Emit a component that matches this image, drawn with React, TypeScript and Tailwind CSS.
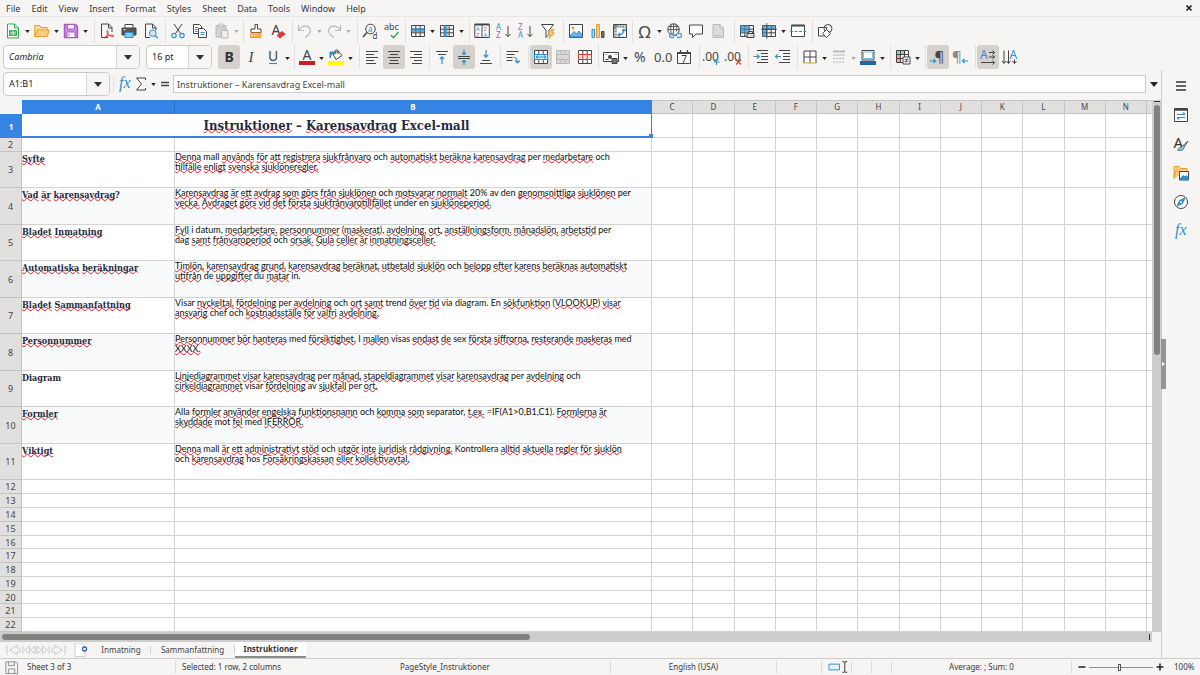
import React from 'react';

const INK = '#454545';
const BLUE = '#2f8fd0';
const GREEN = '#35a853';
const ORANGE = '#ef9a2c';
const RED = '#dc3a3a';
const PURPLE = '#a95cc0';
const GREY = '#b8b8b8';

const gridLines = (color: string) => <path d="M1.5 2.5h13v11h-13zM1.5 6.2h13M1.5 9.8h13M5.8 2.5v11M10.2 2.5v11" stroke={color} />;
const glyph = (x: number, y: number, size: number, color: string, text: string) => (
  <text x={x} y={y} fontSize={size} fill={color} stroke="none" fontFamily="Noto Sans, sans-serif">{text}</text>
);
const glyphPair = (x: number, size: number, top: number, bottom: number, first: string, second: string) => (
  <text fontSize={size} stroke="none" fontFamily="Noto Sans, sans-serif">
    <tspan x={x} y={top} fill={first === 'A' ? BLUE : PURPLE}>{first}</tspan>
    <tspan x={x} y={bottom} fill={second === 'A' ? BLUE : PURPLE}>{second}</tspan>
  </text>
);

const icons: Record<string, React.ReactNode> = {
  new: <><path d="M2.5 1h7l4 4v10h-11z" fill="#fff" stroke={GREEN} /><path d="M9.5 1v4h4" stroke={GREEN} /><path d="M4.5 7.5h7v5h-7z" fill={GREEN} stroke={GREEN} /><path d="M5 9.2h6M5 11h6M8 7.5v5" stroke="#fff" strokeWidth=".7" /></>,
  open: <><path d="M.7 13.5V2.5h5l1.5 2h6v3" fill="#fbd9a0" stroke={ORANGE} /><path d="M.7 13.5 3.4 7h12l-2.2 6.5z" fill="#fbcb80" stroke={ORANGE} /></>,
  save: <><path d="M1.5 1.5h11l2 2v11h-13z" fill="#c98be0" stroke={PURPLE} strokeWidth="1.4" /><path d="M4.5 1.5h7v4.5h-7z" fill="#fff" stroke={PURPLE} /><path d="M4 9h8v5.500H4z" fill="#fff" stroke={PURPLE} /><path d="M6 11v2" stroke={PURPLE} /></>,
  pdf: <><path d="M2.500 1h7l3.500 3.500V9M9 14.500H2.500V1M9.500 1v4h3.500" fill="none" stroke={INK} /><path d="M5.500 15c2.500-2 4-5 3.500-7-.5-1-1.500 0-1 1.200 1 2.600 4 5 6.500 4.300 1-.5-.5-1.500-2.500-1.300-2.500.2-5 1.300-6.500 2.800z" stroke={RED} /></>,
  print: <><path d="M4 5V1.500h8V5" fill="#fff" stroke={INK} /><path d="M1 5h14v7H1z" fill="#565656" stroke={INK} /><path d="M4 9.500h8v5H4z" fill="#8ccaf0" stroke={BLUE} /><path d="M2.500 6.700h2" stroke="#fff" /></>,
  preview: <><path d="M2.500 14.500V1h7l3.500 3.500V7M2.500 14.500H7M9.500 1v4h3.500" stroke={INK} /><circle cx="9.800" cy="10.200" r="3.300" fill="#cfe8f8" stroke={BLUE} /><path d="m12.300 12.800 2.400 2.400" stroke={BLUE} strokeWidth="1.300" /></>,
  cut: <><path d="m4 1 6.500 9.500M12 1 5.500 10.500" stroke={INK} /><circle cx="4" cy="12.500" r="2.200" stroke={BLUE} strokeWidth="1.200" /><circle cx="12" cy="12.500" r="2.200" stroke={BLUE} strokeWidth="1.200" /></>,
  copy: <><path d="M1.500 1.500h6l2 2v7h-8z" fill="#fff" stroke={INK} /><path d="M6.500 5.500h5l3 3v6h-8z" fill="#fff" stroke={INK} /><path d="M3 4.500h3M3 6.500h2.500M3 8.500h2.500M8.500 9.500h4M8.500 11.500h4" stroke={BLUE} /></>,
  paste: <><path d="M2 2.500h10v11.500H2z" fill="#d2d2d0" stroke={GREY} /><path d="M5 1h4v3H5z" fill="#eee" stroke={GREY} /><path d="M7.500 7.500h6.500v7.500H7.500z" fill="#eee" stroke={GREY} /></>,
  brush: <><path d="M7 1.500h2.500V6h3.500v3.500H3V6h4z" fill="#fff" stroke={INK} /><path d="M3 10h10v4.500H2.500z" fill="#fbcb80" stroke={ORANGE} /><path d="M5.500 11v3M8 11v3M10.500 11v3" stroke={ORANGE} /></>,
  clear: <>{glyph(1.500, 12, 14, INK, 'A')}<path d="m7 12.500 5-4 3 2.500-5 4z" fill={RED} stroke={RED} /></>,
  undo: <path d="M1.500 2v5.500H7M2 7c3-5 9-5 11-1 1.500 3-1 6-5 8.500" stroke={GREY} strokeWidth="1.200" />,
  redo: <path d="M14.500 2v5.500H9M14 7C11 2 5 2 3 6c-1.500 3 1 6 5 8.500" stroke={GREY} strokeWidth="1.200" />,
  find: <><circle cx="8.500" cy="6" r="4.800" stroke={INK} /><path d="m5 9.500-4 4.500" stroke={INK} strokeWidth="1.500" /><text fontSize="8" stroke="none" fontFamily="Noto Sans, sans-serif"><tspan x="6" y="8.500" fill={BLUE}>a</tspan><tspan x="10.500" y="15.500" fill={INK}>d</tspan></text></>,
  spell: <>{glyph(0, 7, 9, INK, 'abc')}<path d="m7 12 2.500 2.700L14.500 9" stroke={GREEN} strokeWidth="1.500" /></>,
  rows: <>{gridLines(INK)}<path d="M1.500 5h13v4h-13z" fill={BLUE} fillOpacity=".75" stroke="none" /></>,
  cols: <>{gridLines(INK)}<path d="M4.500 2h4v12h-4z" fill={BLUE} fillOpacity=".75" stroke="none" /></>,
  sort: <><path d="M.8 1.500h14.500v13H.8zM8 1.500v13" fill="#fff" stroke={INK} /><path d="M.8 1.500h14.500" stroke={INK} strokeWidth="2" />{glyphPair(2, 6, 8, 13.500, 'A', 'Z')}{glyphPair(9.500, 6, 8, 13.500, 'Z', 'A')}</>,
  asc: <>{glyphPair(0, 8, 7, 15, 'A', 'Z')}<path d="M12 3v10.500M9.500 11l2.500 2.700 2.500-2.700" stroke={INK} /></>,
  desc: <>{glyphPair(0, 8, 7, 15, 'Z', 'A')}<path d="M12 3v10.500M9.500 11l2.500 2.700 2.500-2.700" stroke={INK} /></>,
  filter: <><path d="M1.500 1.500h12L9 7.500v4l-3 3v-7z" fill="#fff" stroke={INK} /><path d="M11.500 6.500 8 11.500h2.500L9 15.500l5.500-5.500h-2.500l2-3.500z" fill="#fbcb80" stroke={ORANGE} /></>,
  image: <><path d="M1.500 1.500h13v13h-13z" fill="#fff" stroke={INK} /><path d="m2 13 4-4.500 2.500 2.500L11 8l3 4v2H2z" fill="#6db5e6" stroke={BLUE} /><circle cx="5" cy="5" r="1.500" fill={ORANGE} stroke="none" /></>,
  chart: <><path d="M2 6.500h2.500v8H2z" fill="#a9d8f5" stroke={BLUE} /><path d="M6.500 1.500h3v13h-3z" fill="#fbcb80" stroke={ORANGE} /><path d="M11.500 8.500H14v6h-2.500z" fill="#777" stroke={INK} /></>,
  pivot: <><path d="M1.500 1.500h13v13h-13z" fill="#fff" stroke={INK} /><path d="M2 3.500h12.500M3.500 2v12.500" stroke="#8a8a8a" strokeWidth="2.500" strokeDasharray="2 .8" /><path d="M6 12c4 0 6-2 6-6M8 10l-2 2 2 2M10 8l2-2 2 2" stroke={BLUE} strokeWidth="1.200" /></>,
  omega: glyph(1.500, 14.500, 17, INK, 'Ω'),
  link: <><circle cx="7.500" cy="6.500" r="5.700" stroke={INK} /><path d="M2 6.500h11.500M3 3.500h9M7.500 1v9M5.500 1.500Q3.500 6 5.500 11M9.500 1.500q2 3 1 7" stroke={INK} strokeWidth=".8" /><path d="M8 10.500H5.500a2 2 0 0 0 0 4H8M11 10.500h2.500a2 2 0 0 1 0 4H11M7.500 12.500h4" fill="none" stroke="#4b9fea" strokeWidth="1.300" /></>,
  comment: <path d="M1.500 2h13v9H8l-3.500 3.500V11h-3z" fill="#fff" stroke={INK} />,
  header: <path d="M3 1.500h7l3.500 3.500v9.500H3zM10 1.500V5h3.500M5 12.500h6" fill="#dcdcda" stroke={GREY} />,
  printArea: <>{gridLines(INK)}<path d="M1.500 2.500h8.700v7.300H1.500z" fill={BLUE} fillOpacity=".7" stroke="none" /><path d="M8 10.500h7v4H8zM9.500 8.500h4v2h-4z" fill="#ddd" stroke={INK} /></>,
  freeze: <>{gridLines(INK)}<path d="M1.500 2.500h13v3.500H6v8H1.500z" fill={BLUE} fillOpacity=".7" stroke="none" /><path d="M5.800 0v16M0 6.200h16" stroke={INK} strokeWidth=".8" /></>,
  split: <><path d="M1.500 2.500h13v11h-13z" fill="#fff" stroke={INK} /><path d="M1.500 2.500h13" stroke={INK} strokeWidth="2" /><path d="M0 8.500h16" stroke={BLUE} strokeDasharray="3 1.500" /></>,
  shapes: <><path d="M1.500 4.500h8v8.500h-8z" fill="#fff" stroke={INK} /><circle cx="11" cy="5.500" r="4" stroke={INK} /><path d="m9.500 6.500 4 4-4 4-4-4z" fill="#fff" stroke={INK} /></>,
  left: <path d="M2 2.500h12M2 5.500h8M2 8.500h12M2 11.500h8M2 14.500h10" stroke={INK} />,
  center: <path d="M2 2.500h12M4 5.500h8M2 8.500h12M4 11.500h8M3 14.500h10" stroke={INK} />,
  right: <path d="M2 2.500h12M6 5.500h8M2 8.500h12M6 11.500h8M4 14.500h10" stroke={INK} />,
  bold: <text x="3.500" y="13" fontSize="14" fontWeight="700" fill="#333" stroke="none" fontFamily="Noto Sans, sans-serif">B</text>,
  italic: <text x="5.500" y="13" fontSize="15" fontStyle="italic" fill="#444" stroke="none" fontFamily="Liberation Serif, serif">I</text>,
  underline: <>{glyph(3, 12, 14, '#444', 'U')}<path d="M4 14.500h8" stroke={BLUE} strokeWidth="1.200" /></>,
  fontColor: <>{glyph(3.500, 10.500, 14, INK, 'A')}<path d="M0 12h16v4H0z" fill="#c9211e" stroke="none" /></>,
  highlight: <><path d="m5 5 5-3 4 4.500-6 4z" fill="#fff" stroke={INK} /><path d="M7 5.500V2c0-1.500 3-1.500 3 0v3" stroke={INK} /><path d="M2 9V3h5L3.500 5z" fill={BLUE} stroke={BLUE} /><path d="M0 12h16v4H0z" fill="#ffff00" stroke="none" /></>,
  top: <><path d="M2 2.500h12M4 5.500h8" stroke={INK} /><path d="M8 8v7M5.800 10 8 7.800l2.200 2.200" stroke={BLUE} strokeWidth="1.200" /></>,
  middle: <><path d="M2 7.500h12M2 9.500h12" stroke={INK} /><path d="M8 .5v5M6 3.700l2 2 2-2M8 16v-4.500M6 13.300l2-2 2 2" stroke={BLUE} strokeWidth="1.200" /></>,
  bottom: <><path d="M4 11.500h8M2 14.500h12" stroke={INK} /><path d="M8 1v7M5.800 6 8 8.200 10.200 6" stroke={BLUE} strokeWidth="1.200" /></>,
  wrap: <><path d="M1.500 2.500h12M1.500 5.500h8M1.500 8.500h6M1.500 11.500h6" stroke={INK} /><path d="M8.500 8.500c3 0 4 1.500 4 5M10.300 11.500l2.200 2.500 2.500-2.200" stroke={BLUE} strokeWidth="1.200" /></>,
  merge: <><path d="M1.500 1.500h13v13h-13zM5.800 1.500v4M10.200 1.500v4M5.800 11v3.500M10.200 11v3.500" fill="#fff" stroke={INK} /><path d="M1.500 5.500h13v5h-13z" fill="#cfe8f8" stroke={BLUE} /><path d="M3 8h10M5 6.500 3 8l2 1.500M11 6.500 13 8l-2 1.500" stroke={BLUE} /></>,
  mergeOff: <><path d="M1.500 1.500h13v13h-13z" fill="#d8d8d6" stroke={GREY} /><path d="M1.500 5.500h13M1.500 10.500h13M5.800 1.500v4M10.200 1.500v4M5.800 10.500v4M10.200 10.500v4" stroke={GREY} /></>,
  splitCells: <><path d="M1.500 1.500h13v13h-13zM5.800 1.500v4M10.200 1.500v4M5.800 11v3.500M10.200 11v3.500" fill="#fff" stroke={INK} /><path d="M1.500 5.500h13v5h-13zM5.800 5.500v5M10.200 5.500v5" fill="#fde3e3" stroke={RED} /></>,
  currency: <><path d="M.5 3.500h15v9H.5z" fill="#fff" stroke={INK} /><circle cx="7" cy="8" r="2" fill={INK} stroke="none" /><path d="M9 9.500h5v5H9z" fill="#777" stroke={INK} /><path d="M2.500 5.500h1M12.500 5.500h1M2.500 10.500h3" stroke={INK} /></>,
  percent: glyph(2, 13, 14, INK, '%'),
  number: glyph(0, 13, 13, INK, '0.0'),
  date: <><path d="M1.500 3.500h13v11h-13z" fill="#fff" stroke={INK} /><path d="M1.500 4h13" stroke={INK} strokeWidth="2" /><path d="M4.500 1v3M11.500 1v3" stroke={INK} strokeWidth="1.200" />{glyph(5.200, 13.500, 10, '#333', '7')}</>,
  addDec: <>{glyph(-2, 12, 12, INK, '.00')}<path d="M9.500 13h6M12.500 10v6" stroke={BLUE} strokeWidth="1.200" /></>,
  delDec: <>{glyph(-2, 12, 12, INK, '.00')}<path d="m10 10.500 5 5M15 10.500l-5 5" stroke={RED} strokeWidth="1.200" /></>,
  indent: <><path d="M4 1.500h11M8 4.500h7M8 7.500h7M8 10.500h7M4 13.500h11" stroke={INK} /><path d="M.5 7.500h5.500M4 5.300l2.200 2.200L4 9.700" stroke={BLUE} strokeWidth="1.200" /></>,
  outdent: <><path d="M4 1.500h11M8 4.500h7M8 7.500h7M8 10.500h7M4 13.500h11" stroke={INK} /><path d="M6 7.500H.7M2.700 5.300.5 7.500l2.200 2.200" stroke={BLUE} strokeWidth="1.200" /></>,
  borders: <><path d="M2 14V2h12v12M8 2v12M2 8h12" fill="#fff" stroke={INK} /><path d="M1.500 14h13" stroke={ORANGE} /></>,
  lineStyle: <><path d="M2 2.500h12" stroke={GREY} strokeWidth="2" /><path d="M2 6h12" stroke={GREY} /><path d="M2 9.500h12M2 13h12" stroke={GREY} strokeDasharray="2 1" /></>,
  borderColor: <><path d="M2 1.500h12v9.500H2z" fill="#fff" stroke={INK} /><path d="M3.500 3h9v6.500h-9z" stroke="#7ab8e4" /><path d="M0 12h16v4H0z" fill="#1f66a8" stroke="none" /></>,
  conditional: <><path d="M1.500 1.500h9v4h-9z" fill="#8fd6a4" stroke="none" /><path d="M1.500 5.500h4v8h-4z" fill="#f3a0a0" stroke="none" /><path d="M1.500 1.500h12v12h-12zM5.500 1.500v12M9.500 1.500v12M1.500 5.500h12M1.500 9.500h12" stroke={INK} /><path d="M8 8h7v7H8z" fill="#fff" stroke={INK} /><path d="M9.500 10.500h4M9.500 12.500h4M12.500 9.500l-2 4" stroke={INK} strokeWidth=".8" /></>,
  ltr: <>{glyph(4.500, 13, 15, INK, '¶')}<path d="M0 12h5.500M3.500 10l2 2-2 2" stroke={BLUE} strokeWidth="1.200" /></>,
  rtl: <>{glyph(0, 13, 15, '#8a8a8a', '¶')}<path d="M16 12h-5.500M12.500 10l-2 2 2 2" stroke={BLUE} strokeWidth="1.200" /></>,
  horizontal: <>{glyph(0, 10, 12, BLUE, 'A')}<path d="M9 3.500h5.500M12.500 1.500l2 2-2 2M9 8h5.500M12.500 6l2 2-2 2M1 13.500h13.500M12.500 11.500l2 2-2 2" stroke={INK} /></>,
  vertical: <>{glyph(7.500, 10, 12, BLUE, 'A')}<path d="M2 1.500v12.500M0 12l2 2.500L4 12M6.500 1.500v12.500M4.800 12l1.700 2.500L8.300 12M12.500 10.500v4M10.500 12l2 2.500 2-2.500" stroke={INK} /></>,
  fx: <text x="2" y="12" fontSize="16" fontStyle="italic" fill={BLUE} stroke="none" fontFamily="Liberation Serif, serif">fx</text>,
  sigma: <path d="M12.500 4V2H3.500L8.500 8l-5 6h9v-2" stroke={INK} />,
  equals: <path d="M4 6.500h8M4 9.500h8" stroke={INK} strokeWidth="1.500" />,
  menu: <path d="M3 4h10M3 8h10M3 12h10" stroke="#333" strokeWidth="1.500" />,
  properties: <><path d="M1.500 1.500h13v13h-13z" fill="#fff" stroke={INK} /><path d="M1.500 2.500h13" stroke={INK} strokeWidth="2.500" /><path d="M4 7.500h8M10 5.500l2 2M12 10.500H4M6 12.500l-2-2" stroke={BLUE} strokeWidth="1.200" /></>,
  styles: <>{glyph(.5, 11.500, 15, '#333', 'A')}<path d="m15 5-6 5.500c-2 0-2.500 2-4.500 3.500 3 1 6 .5 6.500-2.500z" fill="#8cc4ec" stroke={INK} strokeWidth=".8" /></>,
  gallery: <><path d="M1 13.500v-12h5l1.500 2H14v3M1 13.500 3 6h4" fill="#fbcb80" stroke={ORANGE} /><path d="M6.500 6.500h9v8.500h-9z" fill="#fff" stroke={INK} /><path d="m7 14 3-3.500 2 1.500 1.500-1.500 1.500 2V14.500H7z" fill={BLUE} stroke={BLUE} /></>,
  navigator: <><circle cx="8" cy="8" r="6.500" fill="#fff" stroke={INK} /><path d="m12 4-2.500 5.500L4 12l2.500-5.500z" fill={BLUE} stroke={BLUE} /><circle cx="8" cy="8" r="1" fill="#fff" stroke="none" /></>,
  disk: <path d="M2 2h11l1.500 1.500V14.500H2zM5 2v4h6V2M5 14.500V9.500h6.500v5" fill="none" stroke="#8c8c8c" />,
};

function Icon({ name }: { name: string }) {
  return (
    <svg viewBox="0 0 16 16" className="h-4 w-4 shrink-0 overflow-visible" fill="none" aria-hidden="true">
      {icons[name]}
    </svg>
  );
}

function Caret({ muted }: { muted?: boolean }) {
  return (
    <svg viewBox="0 0 6 4" className="h-[3px] w-[5px]" aria-hidden="true">
      <path d="M0 0h6L3 4z" fill={muted ? '#a9a9a9' : '#222'} />
    </svg>
  );
}

interface Tool {
  name: string;
  label: string;
  menu?: boolean;
  muted?: boolean;
  on?: boolean;
}

interface ToolGroup {
  width: string;
  tools: Tool[];
}

const standardBar: ToolGroup[] = [
  { width: 'w-[94px]', tools: [{ name: 'new', label: 'New', menu: true }, { name: 'open', label: 'Open', menu: true }, { name: 'save', label: 'Save', menu: true }] },
  { width: 'w-[71px]', tools: [{ name: 'pdf', label: 'Export as PDF' }, { name: 'print', label: 'Print' }, { name: 'preview', label: 'Print preview' }] },
  { width: 'w-[78px]', tools: [{ name: 'cut', label: 'Cut' }, { name: 'copy', label: 'Copy' }, { name: 'paste', label: 'Paste', menu: true, muted: true }] },
  { width: 'w-[49px]', tools: [{ name: 'brush', label: 'Clone formatting' }, { name: 'clear', label: 'Clear formatting' }] },
  { width: 'w-[65px]', tools: [{ name: 'undo', label: 'Undo', menu: true, muted: true }, { name: 'redo', label: 'Redo', menu: true, muted: true }] },
  { width: 'w-[48px]', tools: [{ name: 'find', label: 'Find and replace' }, { name: 'spell', label: 'Spelling' }] },
  { width: 'w-[64px]', tools: [{ name: 'rows', label: 'Row', menu: true }, { name: 'cols', label: 'Column', menu: true }] },
  { width: 'w-[94px]', tools: [{ name: 'sort', label: 'Sort' }, { name: 'asc', label: 'Sort ascending' }, { name: 'desc', label: 'Sort descending' }, { name: 'filter', label: 'AutoFilter' }] },
  { width: 'w-[69px]', tools: [{ name: 'image', label: 'Insert image' }, { name: 'chart', label: 'Insert chart' }, { name: 'pivot', label: 'Pivot table' }] },
  { width: 'w-[102px]', tools: [{ name: 'omega', label: 'Special character', menu: true }, { name: 'link', label: 'Hyperlink' }, { name: 'comment', label: 'Comment' }, { name: 'header', label: 'Headers and footers' }] },
  { width: 'w-[78px]', tools: [{ name: 'printArea', label: 'Print area' }, { name: 'freeze', label: 'Freeze', menu: true }, { name: 'split', label: 'Split window' }] },
  { width: 'w-[30px]', tools: [{ name: 'shapes', label: 'Draw functions' }] },
];

const formatBar: ToolGroup[] = [
  { width: 'w-[78px]', tools: [{ name: 'bold', label: 'Bold', on: true }, { name: 'italic', label: 'Italic' }, { name: 'underline', label: 'Underline', menu: true }] },
  { width: 'w-[65px]', tools: [{ name: 'fontColor', label: 'Font color', menu: true }, { name: 'highlight', label: 'Background color', menu: true }] },
  { width: 'w-[70px]', tools: [{ name: 'left', label: 'Align left' }, { name: 'center', label: 'Center', on: true }, { name: 'right', label: 'Align right' }] },
  { width: 'w-[71px]', tools: [{ name: 'top', label: 'Align top' }, { name: 'middle', label: 'Center vertically', on: true }, { name: 'bottom', label: 'Align bottom' }] },
  { width: 'w-[28px]', tools: [{ name: 'wrap', label: 'Wrap text' }] },
  { width: 'w-[70px]', tools: [{ name: 'merge', label: 'Merge and center', on: true }, { name: 'mergeOff', label: 'Merge cells' }, { name: 'splitCells', label: 'Unmerge cells' }] },
  { width: 'w-[101px]', tools: [{ name: 'currency', label: 'Currency', menu: true }, { name: 'percent', label: 'Percent' }, { name: 'number', label: 'Number' }, { name: 'date', label: 'Date' }] },
  { width: 'w-[49px]', tools: [{ name: 'addDec', label: 'Add decimal' }, { name: 'delDec', label: 'Delete decimal' }] },
  { width: 'w-[49px]', tools: [{ name: 'indent', label: 'Increase indent' }, { name: 'outdent', label: 'Decrease indent' }] },
  { width: 'w-[93px]', tools: [{ name: 'borders', label: 'Borders', menu: true }, { name: 'lineStyle', label: 'Border style', menu: true, muted: true }, { name: 'borderColor', label: 'Border color', menu: true }] },
  { width: 'w-[35px]', tools: [{ name: 'conditional', label: 'Conditional', menu: true }] },
  { width: 'w-[50px]', tools: [{ name: 'ltr', label: 'Left to right', on: true }, { name: 'rtl', label: 'Right to left' }] },
  { width: 'w-[50px]', tools: [{ name: 'horizontal', label: 'Text direction horizontal', on: true }, { name: 'vertical', label: 'Text direction vertical' }] },
];

function ToolGroups({ groups }: { groups: ToolGroup[] }) {
  return (
    <>
      {groups.map((group, index) => (
        <div key={group.tools[0].name} className={`flex h-6 shrink-0 items-center border-l pl-px ${index === 0 ? 'border-transparent' : 'border-[#e2e1df]'} ${group.width}`}>
          {group.tools.map(tool => (
            <React.Fragment key={tool.name}>
              <button type="button" aria-label={tool.label} aria-pressed={tool.on} className={`flex h-6 w-[22px] shrink-0 items-center justify-center rounded-[3px] ${tool.on ? 'bg-[#d5d1cd]' : ''}`}>
                <Icon name={tool.name} />
              </button>
              {tool.menu && (
                <button type="button" aria-label={`${tool.label} options`} className="flex h-6 w-[7px] shrink-0 items-center justify-center pt-0.5">
                  <Caret muted={tool.muted} />
                </button>
              )}
            </React.Fragment>
          ))}
        </div>
      ))}
    </>
  );
}

function Combo({ label, value, width, italic }: { label: string; value: string; width: string; italic?: boolean }) {
  return (
    <div className={`flex h-6 shrink-0 overflow-hidden rounded-[4px] border border-[#cdc9c5] bg-white ${width}`}>
      <input aria-label={label} defaultValue={value} className={`min-w-0 flex-1 px-[5px] text-[9px] text-[#222] outline-none ${italic ? 'italic' : ''}`} />
      <button type="button" aria-label={`${label} list`} className="flex w-[23px] shrink-0 items-center justify-center border-l border-[#d8d5d2] bg-[#f6f5f4]">
        <svg viewBox="0 0 8 5" className="h-[5px] w-2" aria-hidden="true"><path d="M0 0h8L4 5z" fill="#333" /></svg>
      </button>
    </div>
  );
}

const menus = ['File', 'Edit', 'View', 'Insert', 'Format', 'Styles', 'Sheet', 'Data', 'Tools', 'Window', 'Help'];
const columns = ['C', 'D', 'E', 'F', 'G', 'H', 'I', 'J', 'K', 'L', 'M', 'N'];

// Words in [brackets] get the spell-check underline.
const notes = [
  { height: 'h-9', title: '[Syfte]', lines: ['[Denna] mall [används] [för] [att] [registrera] [sjukfrånvaro] och [automatiskt] [beräkna] [karensavdrag] per [medarbetare] och', '[tillfälle] [enligt] [svenska] [sjuklöneregler.]'] },
  { height: 'h-[37px]', title: '[Vad] [är] [karensavdrag]?', lines: ['[Karensavdrag] [är] [ett] [avdrag] [som] [görs] [från] [sjuklönen] och [motsvarar] [normalt] 20% av den [genomsnittliga] [sjuklönen] per', '[vecka.] [Avdraget] [görs] [vid] [det] [första] [sjukfrånvarotillfället] under en [sjuklöneperiod.]'] },
  { height: 'h-9', title: '[Bladet] [Inmatning]', lines: ['[Fyll] i datum, [medarbetare,] [personnummer] ([maskerat]), [avdelning,] [ort,] [anställningsform,] [månadslön,] [arbetstid] per', 'dag [samt] [frånvaroperiod] och [orsak.] [Gula] [celler] [är] [inmatningsceller.]'] },
  { height: 'h-[37px]', title: '[Automatiska] [beräkningar]', lines: ['[Timlön,] [karensavdrag] [grund,] [karensavdrag] [beräknat,] [utbetald] [sjuklön] och [belopp] [efter] [karens] [beräknas] [automatiskt]', '[utifrån] de [uppgifter] du [matar] in.'] },
  { height: 'h-9', title: '[Bladet] [Sammanfattning]', lines: ['Visar [nyckeltal,] [fördelning] per [avdelning] och [ort] [samt] trend [över] [tid] via diagram. En [sökfunktion] ([VLOOKUP]) [visar]', '[ansvarig] chef och [kostnadsställe] [för] [valfri] [avdelning.]'] },
  { height: 'h-[37px]', title: '[Personnummer]', lines: ['[Personnummer] [bör] [hanteras] med [försiktighet.] I [mallen] visas [endast] [de] sex [första] [siffrorna,] [resterande] [maskeras] med', '[XXXX.]'] },
  { height: 'h-9', title: 'Diagram', lines: ['[Linjediagrammet] [visar] [karensavdrag] per [månad,] [stapeldiagrammet] [visar] [karensavdrag] per [avdelning] och', '[cirkeldiagrammet] visar [fördelning] av [sjukfall] per [ort.]'] },
  { height: 'h-[37px]', title: '[Formler]', lines: ['Alla [formler] [använder] [engelska] [funktionsnamn] och [komma] [som] separator, [t.ex.] =IF(A1>0,B1,C1). [Formlerna] [är]', '[skyddade] mot [fel] med [IFERROR.]'] },
  { height: 'h-9', title: '[Viktigt]', lines: ['[Denna] mall [är] [ett] [administrativt] [stöd] och [utgör] [inte] [juridisk] [rådgivning.] Kontrollera [alltid] [aktuella] [regler] [för] [sjuklön]', 'och [karensavdrag] hos [Försäkringskassan] [eller] [kollektivavtal.]'] },
];

const blankRows = ['h-3.5', 'h-3.5', 'h-3.5', 'h-3.5', 'h-[13px]', 'h-3.5', 'h-3.5', 'h-3.5', 'h-[13px]', 'h-3.5', 'h-3.5'];

function Checked({ text }: { text: string }) {
  return (
    <>
      {text.split(/(\[[^\]]+\])/).map((part, index) =>
        part.startsWith('[') ? (
          <span key={index} className="underline decoration-[#e02020] decoration-wavy decoration-1 -underline-offset-1 [text-decoration-skip-ink:none]">{part.slice(1, -1)}</span>
        ) : (
          part
        )
      )}
    </>
  );
}

const cell = 'border-r border-b border-[#d3d3d3] p-0';
const rowHead = 'border-r border-b border-[#c4c3c2] bg-[#e1e0df] p-0 text-center align-middle text-[9px] font-normal leading-none text-[#444]';

function EmptyCells() {
  return (
    <>
      {columns.map(column => <td key={column} className={cell}></td>)}
      <td className="border-b border-[#d3d3d3] p-0"></td>
    </>
  );
}

function SheetGrid() {
  return (
    <table className="w-full table-fixed border-separate border-spacing-0 bg-white">
      <colgroup>
        <col className="w-[22px]" />
        <col className="w-[153px]" />
        <col className="w-[477px]" />
        {columns.map(column => <col key={column} />)}
        <col className="w-[5px]" />
      </colgroup>
      <thead>
        <tr className="h-3.5 text-[8px] leading-none text-[#444]">
          <th className="bg-[#f6f5f4] p-0"></th>
          <th scope="col" className="border-r border-[#2c6fc2] bg-[#3584e4] p-0 font-bold text-white">A</th>
          <th scope="col" className="border-r border-[#3584e4] bg-[#3584e4] p-0 font-bold text-white">B</th>
          {columns.map(column => (
            <th key={column} scope="col" className="border-t border-r border-b border-[#c4c3c2] bg-[#e1e0df] p-0 font-normal">{column}</th>
          ))}
          <th className="border-t border-b border-[#c4c3c2] bg-[#e1e0df] p-0"></th>
        </tr>
      </thead>
      <tbody>
        <tr className="h-6">
          <th scope="row" className="bg-[#3584e4] p-0 text-[9px] leading-none font-bold text-white">1</th>
          <td colSpan={2} className="relative border-r border-b-2 border-[#3584e4] p-0 text-center align-middle font-['DejaVu_Serif_Condensed','DejaVu_Serif',serif] text-[13px] leading-none font-bold text-[#1f2a40]">
            <Checked text="[Instruktioner] – [Karensavdrag] Excel-mall" />
            <span className="absolute -right-0.5 -bottom-0.5 h-1 w-1 bg-[#3584e4]"></span>
          </td>
          <EmptyCells />
        </tr>
        <tr className="h-3.5">
          <th scope="row" className={rowHead}>2</th>
          <td className={cell}></td>
          <td className={cell}></td>
          <EmptyCells />
        </tr>
        {notes.map((note, index) => (
          <tr key={note.title} className={note.height}>
            <th scope="row" className={rowHead}>{index + 3}</th>
            <td className={`${cell} align-top font-['DejaVu_Serif_Condensed','DejaVu_Serif',serif] text-[9px] leading-[14px] font-bold whitespace-nowrap text-[#1f2a40] ${index % 2 ? 'bg-[#f8fafc]' : ''}`}>
              <Checked text={note.title} />
            </td>
            <td className={`${cell} align-top font-[Lato,sans-serif] text-[9px] leading-[10px] whitespace-nowrap text-[#111] ${index % 2 ? 'bg-[#f8fafc]' : ''}`}>
              {note.lines.map(line => <div key={line}><Checked text={line} /></div>)}
            </td>
            <EmptyCells />
          </tr>
        ))}
        {blankRows.map((height, index) => (
          <tr key={index} className={height}>
            <th scope="row" className={rowHead}>{index + 12}</th>
            <td className={cell}></td>
            <td className={cell}></td>
            <EmptyCells />
          </tr>
        ))}
      </tbody>
    </table>
  );
}

function SheetTabs() {
  return (
    <div className="flex h-4 shrink-0 items-stretch text-[8px] leading-none">
      <div className="flex w-[70px] shrink-0 items-center pl-1.5">
        {['M1 1v10M12 1 4 6l8 5V8h3V4h-3z', 'M2 2v8M9 2 4 6l5 4zM15 2l-5 4 5 4z', 'M1 2l5 4-5 4zM7 2l5 4-5 4zM14 2v8', 'M4 1l8 5-8 5V8H1V4h3zM15 1v10'].map((d, index) => (
          <button key={d} type="button" aria-label={['First sheet', 'Previous sheet', 'Next sheet', 'Last sheet'][index]} className="w-[15px]">
            <svg viewBox="0 0 16 12" className="h-3 w-[15px]" fill="none" stroke="#c9c8c6"><path d={d} /></svg>
          </button>
        ))}
      </div>
      <button type="button" aria-label="Add sheet" className="flex w-[26px] shrink-0 items-center pl-1">
        <svg viewBox="0 0 14 14" className="h-3.5 w-3.5" fill="none">
          <path d="M1 0h7l3 3v10.500H1z" fill="#fff" stroke="#d0d0d0" />
          <circle cx="10.500" cy="6" r="2" fill="#fff" stroke="#2a62b0" strokeWidth="1.300" />
        </svg>
      </button>
      <button type="button" className="w-[54px] shrink-0 pr-1 text-center text-[#444]">Inmatning</button>
      <button type="button" className="my-1 w-[85px] shrink-0 border-x border-[#cfcfcf] text-center text-[#444]">Sammanfattning</button>
      <button type="button" className="w-[71px] shrink-0 border-b-2 border-[#8b8d8b] bg-white text-center font-bold text-[#333]">Instruktioner</button>
    </div>
  );
}

function StatusBar() {
  const item = 'flex h-3 shrink-0 items-center border-l border-[#dcdbd9]';
  return (
    <footer className="flex h-[17px] shrink-0 items-center border-t border-[#cfcdcb] text-[8px] leading-none whitespace-nowrap text-[#3a3a3a]">
      <div className="flex w-[175px] shrink-0 items-center gap-2 pl-1">
        <svg viewBox="0 0 16 16" className="h-[15px] w-[15px]" fill="none">{icons.disk}</svg>
        <span>Sheet 3 of 3</span>
      </div>
      <div className={`${item} w-[219px] pl-1.5`}>Selected: 1 row, 2 columns</div>
      <div className="w-[216px] shrink-0 pl-1.5">PageStyle_Instruktioner</div>
      <div className={`${item} w-[166px] justify-center`}>English (USA)</div>
      <div className={`${item} w-[45px]`}></div>
      <div className={`${item} w-[30px] gap-1 pl-1.5`}>
        <svg viewBox="0 0 24 14" className="h-3.5 w-6" fill="none">
          <path d="M1 4h11v6H1z" fill="#e8f3fb" stroke={BLUE} />
          <path d="M15 1.500h2l.5.500.5-.5h2M17.500 2v10M15 12.500h2l.5-.5.5.5h2" stroke="#333" />
        </svg>
      </div>
      <div className={`${item} w-5`}></div>
      <div className={`${item} w-5`}></div>
      <div className={`${item} flex-1 justify-center`}>Average: ; Sum: 0</div>
      <div className={`${item} w-[129px] pl-1.5`}>
        <button type="button" aria-label="Zoom out" className="h-3 w-2"><svg viewBox="0 0 8 8" className="h-2 w-2"><path d="M.5 4h7" stroke="#222" strokeWidth="1.500" /></svg></button>
        <input
          type="range"
          aria-label="Zoom"
          defaultValue={48}
          className="mx-[3px] h-3 w-[64px] appearance-none bg-transparent [&::-webkit-slider-runnable-track]:h-px [&::-webkit-slider-runnable-track]:bg-[#8e8e8e] [&::-webkit-slider-thumb]:-mt-[3px] [&::-webkit-slider-thumb]:h-[7px] [&::-webkit-slider-thumb]:w-[3px] [&::-webkit-slider-thumb]:appearance-none [&::-webkit-slider-thumb]:border [&::-webkit-slider-thumb]:border-[#555] [&::-webkit-slider-thumb]:bg-[#f6f5f4]"
        />
        <button type="button" aria-label="Zoom in" className="h-3 w-2"><svg viewBox="0 0 8 8" className="h-2 w-2"><path d="M.5 4h7M4 .5v7" stroke="#222" strokeWidth="1.500" /></svg></button>
        <span className="ml-2.5">100%</span>
      </div>
    </footer>
  );
}

export default function App() {
  return (
    <div className="flex h-screen flex-col overflow-hidden bg-[#f6f5f4] font-['Noto_Sans',sans-serif] text-[#3a3a3a]">
      <nav className="flex h-[17px] shrink-0 items-center gap-px border-b border-[#e8e7e5] pl-px text-[9px] leading-none">
        {menus.map(menu => <button key={menu} type="button" className="px-[5px]">{menu}</button>)}
        <button type="button" aria-label="Close document" className="mr-[7px] ml-auto">
          <svg viewBox="0 0 8 8" className="h-2 w-2"><path d="m1.500 1.500 5 5M6.500 1.500l-5 5" stroke="#222" strokeWidth="1.700" /></svg>
        </button>
      </nav>
      <div className="flex h-[27px] shrink-0 items-center"><ToolGroups groups={standardBar} /></div>
      <div className="flex h-[26px] shrink-0 items-center pl-[3px]">
        <Combo label="Font name" value="Cambria" width="mr-1.5 w-[137px]" italic />
        <Combo label="Font size" value="16 pt" width="mr-1 w-[66px]" />
        <ToolGroups groups={formatBar} />
      </div>

      <div className="flex min-h-0 flex-1">
        <main className="flex min-w-0 flex-1 flex-col">
          <div className="flex h-[30px] shrink-0 items-center pb-0.5 pl-[3px]">
            <Combo label="Name box" value="A1:B1" width="mr-[3px] w-[107px]" />
            <div className="flex items-center border-l border-[#e2e1df] pl-[3px]">
              <button type="button" aria-label="Function wizard"><Icon name="fx" /></button>
              <button type="button" aria-label="Select function"><Icon name="sigma" /></button>
              <button type="button" aria-label="Function list" className="flex w-2 items-center justify-center"><Caret /></button>
              <button type="button" aria-label="Formula"><Icon name="equals" /></button>
            </div>
            <input aria-label="Input line" defaultValue="Instruktioner – Karensavdrag Excel-mall" className="h-[18px] min-w-0 flex-1 border border-[#cfcdcb] bg-white px-[3px] text-[9px] text-[#444] outline-none" />
            <button type="button" aria-label="Expand formula bar" className="flex w-[15px] justify-center">
              <svg viewBox="0 0 8 5" className="h-[5px] w-2"><path d="M0 0h8L4 5z" fill="#222" /></svg>
            </button>
          </div>
          <div className="flex min-h-0 flex-1">
            <div className="min-w-0 flex-1 overflow-hidden bg-white"><SheetGrid /></div>
            <div className="flex w-[9px] shrink-0 flex-col items-center bg-[#cdcdcd]">
              <div className="mt-px mb-[3px] h-px w-1.5 bg-[#333]"></div>
              <div className="h-[47%] w-1.5 rounded-full bg-[#808280]"></div>
            </div>
          </div>
          <div className="mr-[9px] flex h-2.5 shrink-0 items-center justify-between bg-[#cdcdcd] px-0.5">
            <div className="h-1.5 w-[46%] rounded-full bg-[#808280]"></div>
            <div className="h-1.5 w-px bg-[#333]"></div>
          </div>
          <SheetTabs />
        </main>
        <aside className="relative flex w-[39px] shrink-0 flex-col items-center gap-[13px] border-l border-[#cfcdcb] pt-2">
          {['menu', 'properties', 'styles', 'gallery', 'navigator', 'fx'].map(name => (
            <button key={name} type="button" aria-label={name}><Icon name={name} /></button>
          ))}
          <button type="button" aria-label="Collapse sidebar" className="absolute top-[269px] -left-px flex h-[50px] w-[5px] items-center justify-center bg-[#949694]">
            <svg viewBox="0 0 3 4" className="h-1 w-[3px]"><path d="M0 0l3 2-3 2z" fill="#fff" /></svg>
          </button>
        </aside>
      </div>
      <StatusBar />
    </div>
  );
}
